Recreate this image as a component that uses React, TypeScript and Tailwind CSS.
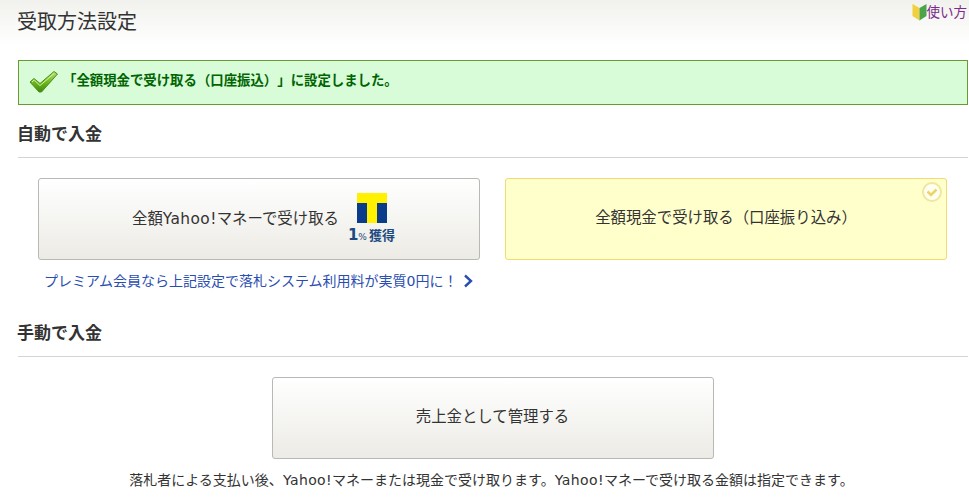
const FONT = "font-['DejaVu_Sans','Noto_Sans_CJK_JP',sans-serif] [text-spacing-trim:space-all]";

function Check() {
  return (
    <svg width="30" height="24" viewBox="0 0 30 24" className="shrink-0">
      <defs>
        <linearGradient id="ck" x1="0" y1="0" x2="0" y2="1">
          <stop offset="0" stopColor="#b4e36a" />
          <stop offset="0.55" stopColor="#6ab61e" />
          <stop offset="1" stopColor="#3f8a0c" />
        </linearGradient>
      </defs>
      <path d="M1 12 L5 8.5 L11 13.5 L25 1.5 L28.5 4 L12.5 22 L10 22 Z" fill="url(#ck)" stroke="#4d8f18" strokeWidth="1" strokeLinejoin="round" />
      <path d="M3 12 L5.2 10 L11 15.5 L25 3.5" fill="none" stroke="#d4f2a0" strokeWidth="1" />
    </svg>
  );
}

function Beginner() {
  return (
    <svg width="15" height="18" viewBox="0 0 15 18" className="shrink-0">
      <path d="M0.5 1 L7.5 5 L7.5 17.5 L0.5 13 Z" fill="#f2cf3d" />
      <path d="M14.5 1 L7.5 5 L7.5 17.5 L14.5 13 Z" fill="#4aa54a" />
    </svg>
  );
}

function TPoint() {
  return (
    <div className="flex flex-col items-center">
      <svg width="30" height="30" viewBox="0 0 30 30" className="ml-[1px]">
        <rect width="30" height="30" fill="#fff100" />
        <rect y="10" width="10" height="20" fill="#0b3c8c" />
        <rect x="20" y="10" width="10" height="20" fill="#0b3c8c" />
      </svg>
      <div className="mt-[4px] flex items-baseline font-bold leading-[16px] text-[#1c4a80]">
        <span className="text-[15px]">1</span>
        <span className="text-[9px] font-normal">%</span>
        <span className="ml-[2px] text-[13px]">獲得</span>
      </div>
    </div>
  );
}

function SelectedMark() {
  return (
    <svg width="20" height="20" viewBox="0 0 20 20" className="absolute right-[4px] top-[3px]">
      <circle cx="10" cy="10" r="9" fill="#fffff0" stroke="#f0e6a0" strokeWidth="2" />
      <path d="M5.5 9.5 L9 13 L14.5 7.5" fill="none" stroke="#ecd36a" strokeWidth="2.5" />
    </svg>
  );
}

const btn =
  "flex h-[82px] w-[442px] items-center justify-center rounded-[3px] border border-[#b8b8b4] bg-gradient-to-b from-[#ffffff] to-[#ecebe5] text-[15.4px] text-[#333333]";

function Heading({ children }: { children: string }) {
  return (
    <div className="mr-px border-b border-[#d4d4d4] pb-[12px]">
      <h2 className="-ml-px text-[17px] font-bold leading-[22px] text-[#333333]">{children}</h2>
    </div>
  );
}

export default function App() {
  return (
    <div className={`${FONT} min-h-[501px] w-[969px] bg-white`}>
      <header className="flex h-[45px] items-start justify-between bg-gradient-to-b from-[#f1f1ed] to-[#ffffff] pl-[17px] pr-[2px]">
        <h1 className="mt-[8px] text-[20px] font-normal leading-[28px] text-[#333333]">受取方法設定</h1>
        <a className="mt-[3px] flex items-center text-[13.5px] leading-[18px] text-[#7d2a8c]">
          <Beginner />
          <span>使い方</span>
        </a>
      </header>

      <main className="pl-[18px]">
        <div className="mt-[15px] flex h-[45px] w-[950px] items-center border border-[#6a9a32] bg-[#d8fbd8] pb-[2px] pl-[10px] text-[13.4px] font-bold text-[#006400]">
          <Check />
          <span className="ml-[4px]">「全額現金で受け取る（口座振込）」に設定しました。</span>
        </div>

        <section className="mt-[18px]">
          <Heading>自動で入金</Heading>
          <div className="mt-[20px] flex gap-[25px] pl-[20px]">
            <button className={`${btn} gap-[9px] pl-[9px]`}>
              <span className="mt-[1px]">全額<span className="tracking-[0.4px]">Yahoo!</span>マネーで受け取る</span>
              <span className="-mt-[1px]"><TPoint /></span>
            </button>
            <div className="relative flex h-[82px] w-[442px] items-center justify-center rounded-[3px] border border-[#f0dc70] bg-[#ffffcc] text-[15.4px] text-[#333333]">
              <span>全額現金で受け取る（口座振り込み）</span>
              <SelectedMark />
            </div>
          </div>
          <a className="ml-[26px] mt-[11px] flex h-[20px] items-center text-[14px] text-[#2a4eb0]">
            <span>プレミアム会員なら上記設定で落札システム利用料が実質0円に！</span>
            <svg width="10" height="14" viewBox="0 0 10 14" className="ml-[5px]">
              <path d="M2 1.5 L8 7 L2 12.5" fill="none" stroke="#2a4eb0" strokeWidth="2.4" />
            </svg>
          </a>
        </section>

        <section className="mt-[31px]">
          <Heading>手動で入金</Heading>
          <div className="mt-[20px] flex justify-center pr-[2px]">
            <button className={btn}>売上金として管理する</button>
          </div>
          <p className="mt-[11px] pr-[4px] text-center text-[14px] leading-[20px] text-[#333333]">
            落札者による支払い後、<span className="tracking-[0.4px]">Yahoo!</span>マネーまたは現金で受け取ります。<span className="tracking-[0.4px]">Yahoo!</span>マネーで受け取る金額は指定できます。
          </p>
        </section>
      </main>
    </div>
  );
}
